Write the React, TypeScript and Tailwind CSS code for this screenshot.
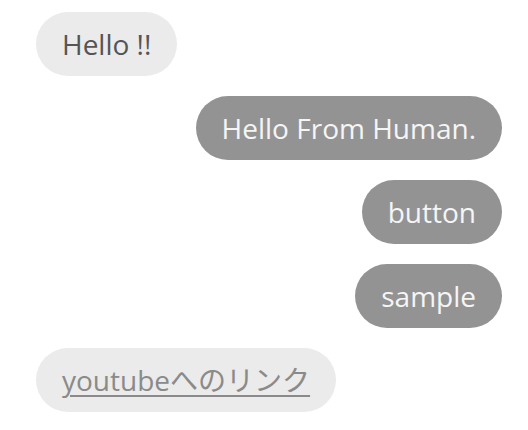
import React from "react";

type Msg = { text: string; from: "bot" | "human"; link?: boolean };

const messages: Msg[] = [
  { text: "Hello !!", from: "bot" },
  { text: "Hello From Human.", from: "human" },
  { text: "button", from: "human" },
  { text: "sample", from: "human" },
  { text: "youtubeへのリンク", from: "bot", link: true },
];

export default function App() {
  return (
    <div
      className="flex flex-col gap-5 bg-white pl-9 pr-[26px] pt-3 min-h-screen"
      style={{ fontFamily: '"Open Sans", "Noto Sans CJK JP", sans-serif' }}
    >
      {messages.map((m, i) =>
        m.from === "bot" ? (
          <div key={i} className="flex justify-start">
            <div className="h-16 flex items-center rounded-full bg-[#ebebeb] px-[26px] text-[28px] text-[#555555]">
              {m.link ? (
                <a href="#" className="text-[#8a8a8a] underline underline-offset-4 decoration-[1.5px]">
                  {m.text}
                </a>
              ) : (
                m.text
              )}
            </div>
          </div>
        ) : (
          <div key={i} className="flex justify-end">
            <div className="h-16 flex items-center rounded-full bg-[#939393] px-[26px] text-[28px] text-[#f5f5f5]">
              {m.text}
            </div>
          </div>
        )
      )}
    </div>
  );
}
